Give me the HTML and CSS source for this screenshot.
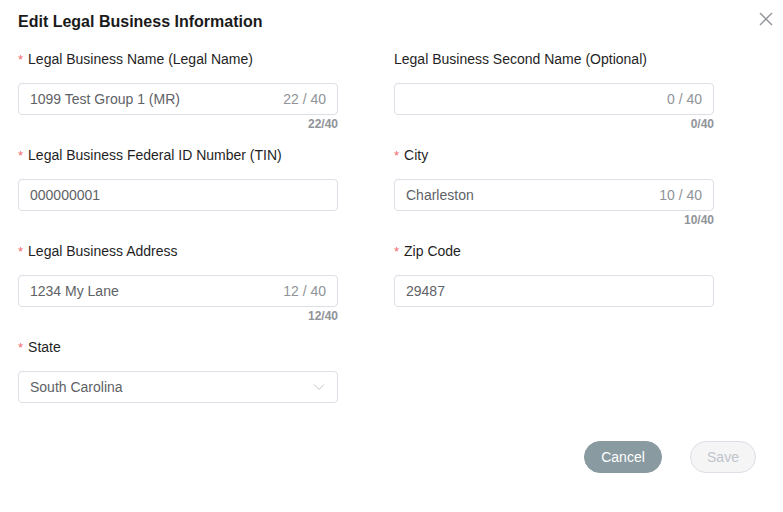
FILE: index.html
```html
<!DOCTYPE html>
<html>
<head>
<meta charset="utf-8">
<link rel="stylesheet" href="styles.css">
</head>
<body>
<div class="dialog">
  <div class="header">
    <h1 class="title">Edit Legal Business Information</h1>
    <button class="close" aria-label="Close">
      <svg width="14" height="14" viewBox="0 0 14 14"><path d="M1 1L13 13M13 1L1 13" stroke="#909399" stroke-width="1.4" fill="none"/></svg>
    </button>
  </div>
  <div class="form">
    <div class="item">
      <div class="label"><span class="req">*</span>Legal Business Name (Legal Name)</div>
      <div class="input"><span class="val">1099 Test Group 1 (MR)</span><span class="count">22 / 40</span></div>
      <div class="below">22/40</div>
    </div>
    <div class="item">
      <div class="label">Legal Business Second Name (Optional)</div>
      <div class="input"><span class="val"></span><span class="count">0 / 40</span></div>
      <div class="below">0/40</div>
    </div>
    <div class="item">
      <div class="label"><span class="req">*</span>Legal Business Federal ID Number (TIN)</div>
      <div class="input"><span class="val">000000001</span></div>
    </div>
    <div class="item">
      <div class="label"><span class="req">*</span>City</div>
      <div class="input"><span class="val">Charleston</span><span class="count">10 / 40</span></div>
      <div class="below">10/40</div>
    </div>
    <div class="item">
      <div class="label"><span class="req">*</span>Legal Business Address</div>
      <div class="input"><span class="val">1234 My Lane</span><span class="count">12 / 40</span></div>
      <div class="below">12/40</div>
    </div>
    <div class="item">
      <div class="label"><span class="req">*</span>Zip Code</div>
      <div class="input"><span class="val">29487</span></div>
    </div>
    <div class="item">
      <div class="label"><span class="req">*</span>State</div>
      <div class="input"><span class="val">South Carolina</span>
        <svg class="arrow" width="12" height="8" viewBox="0 0 12 8"><path d="M1 1.5L6 6.5L11 1.5" stroke="#c0c4cc" stroke-width="1" fill="none"/></svg>
      </div>
    </div>
  </div>
  <div class="footer">
    <button class="btn cancel">Cancel</button>
    <button class="btn save">Save</button>
  </div>
</div>
</body>
</html>
```
FILE: styles.css
```css
* { box-sizing: border-box; }
body {
  margin: 0;
  background: #fff;
  font-family: "Liberation Sans", Arial, sans-serif;
  color: #303133;
}
.dialog {
  width: 783px;
  height: 512px;
  padding: 10px 0 0 18px;
}
.header {
  display: flex;
  justify-content: space-between;
  align-items: flex-start;
  height: 39px;
}
.title {
  margin: 0;
  font-size: 16px;
  line-height: 24px;
  font-weight: bold;
  color: #1a1a1a;
}
.close {
  border: none;
  background: none;
  padding: 0;
  margin: 2px 10px 0 0;
  width: 14px;
  height: 14px;
  display: flex;
}
.form {
  display: grid;
  grid-template-columns: 320px 320px;
  column-gap: 56px;
  grid-auto-rows: 96px;
}
.item {
  display: flex;
  flex-direction: column;
}
.label {
  font-size: 14px;
  line-height: 20px;
  height: 20px;
  color: #1f1f1f;
  margin-bottom: 14px;
}
.req {
  color: #f56c6c;
  font-size: 13px;
  margin-right: 5px;
}
.input {
  height: 32px;
  border: 1px solid #dcdfe6;
  border-radius: 4px;
  display: flex;
  align-items: center;
  padding: 0 11px;
  font-size: 14px;
  color: #606266;
}
.val { flex: 1; }
.count { color: #909399; }
.arrow { margin-right: 1px; }
.below {
  text-align: right;
  font-size: 12px;
  line-height: 14px;
  margin-top: 2px;
  font-weight: bold;
  color: #909399;
}
.footer {
  display: flex;
  justify-content: flex-end;
  gap: 28px;
  margin-top: 8px;
  padding-right: 27px;
}
.btn {
  height: 32px;
  border-radius: 16px;
  font-family: "Liberation Sans", Arial, sans-serif;
  font-size: 14px;
  padding: 0;
}
.cancel {
  width: 78px;
  background: #899aa1;
  border: 1px solid #899aa1;
  color: #fff;
}
.save {
  width: 66px;
  background: #f5f5f5;
  border: 1px solid #dcdfe6;
  color: #c0c4cc;
}
```
